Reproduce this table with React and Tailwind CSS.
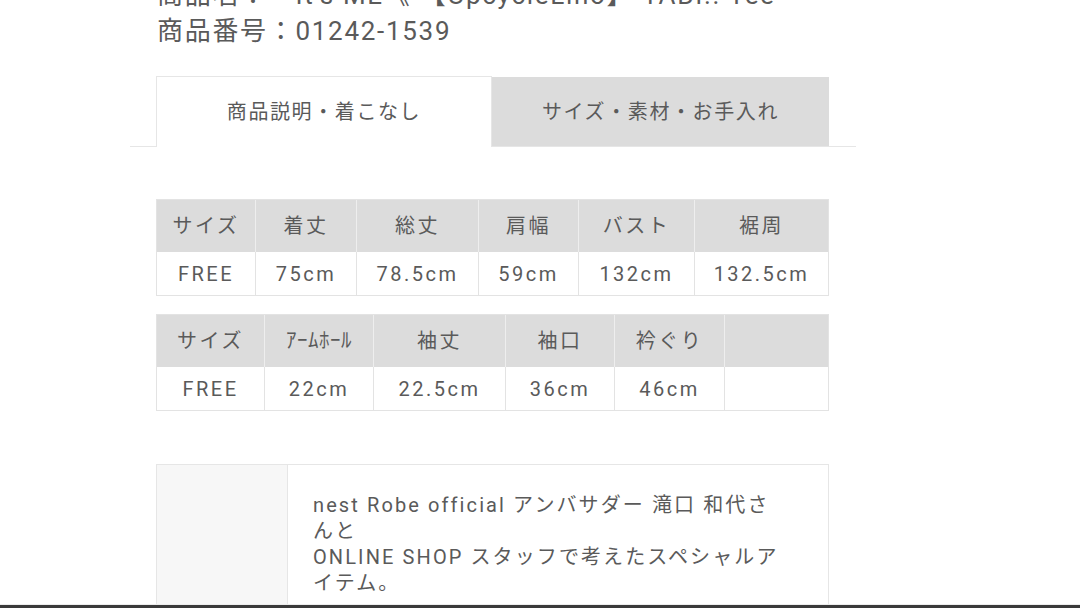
const FONT = { fontFamily: 'Roboto, "Noto Sans CJK JP", sans-serif' };

const table1 = {
  cols: "98px 101px 122px 100px 116px 1fr",
  head: ["サイズ", "着丈", "総丈", "肩幅", "バスト", "裾周"],
  body: ["FREE", "75cm", "78.5cm", "59cm", "132cm", "132.5cm"],
};

const table2 = {
  cols: "107px 109px 132px 109px 110px 1fr",
  head: ["サイズ", "ｱｰﾑﾎｰﾙ", "袖丈", "袖口", "衿ぐり", ""],
  body: ["FREE", "22cm", "22.5cm", "36cm", "46cm", ""],
};

function SizeTable({ table }) {
  return (
    <div className="border border-[#e3e3e3]">
      <div className="grid bg-[#dcdcdc]" style={{ gridTemplateColumns: table.cols }}>
        {table.head.map((label, i) => (
          <div
            key={i}
            className={`flex h-[52px] items-center justify-center ${
              i > 0 ? "border-l border-[#eeeeee]" : ""
            } ${label.startsWith("ｱ") ? "text-[21px] tracking-[0.5px]" : "tracking-[2.5px]"}`}
          >
            {label}
          </div>
        ))}
      </div>
      <div className="grid bg-white" style={{ gridTemplateColumns: table.cols }}>
        {table.body.map((value, i) => (
          <div
            key={i}
            className={`flex h-[43px] items-center justify-center tracking-[2.5px] ${
              i > 0 ? "border-l border-[#e3e3e3]" : ""
            }`}
          >
            {value}
          </div>
        ))}
      </div>
    </div>
  );
}

export default function App() {
  return (
    <div className="flex h-[608px] w-[1080px] flex-col overflow-hidden bg-white text-[#5a5a5a]" style={FONT}>
      <div className="flex-1 overflow-hidden">
        <div className="pl-[130px]" style={{ width: 856 }}>
          <div className="pl-[27px] text-[26px] leading-[36px] tracking-[1.7px]">
            <div className="-mt-[23px] whitespace-nowrap">商品名：　It's ME《 【UpcycleLino】 TABI.. Tee</div>
            <div className="whitespace-nowrap">商品番号：01242-1539</div>
          </div>

          <div className="mt-[27px] border-b border-[#e6e6e6] pl-[26px] pr-[27px]">
            <div className="-mb-px flex text-[20px] tracking-[1.6px]">
              <div className="flex h-[71px] w-[336px] items-center justify-center border border-b-0 border-[#e6e6e6] bg-white">
                商品説明・着こなし
              </div>
              <div className="mt-px flex h-[69px] flex-1 items-center justify-center bg-[#dcdcdc]">
                サイズ・素材・お手入れ
              </div>
            </div>
          </div>

          <div className="pl-[26px] pr-[27px] text-[20px]">
            <div className="mt-[52px]">
              <SizeTable table={table1} />
            </div>
            <div className="mt-[18px]">
              <SizeTable table={table2} />
            </div>

            <div className="mt-[53px] flex h-[200px] border border-[#e6e6e6]">
              <div className="w-[131px] border-r border-[#e6e6e6] bg-[#f7f7f7]" />
              <div className="flex-1 px-[25px] pt-[27px] text-[20px] leading-[26px] tracking-[2.1px]">
                <div className="whitespace-nowrap">nest Robe official アンバサダー 滝口 和代さ</div>
                <div className="whitespace-nowrap">んと</div>
                <div className="whitespace-nowrap">ONLINE SHOP スタッフで考えたスペシャルア</div>
                <div className="whitespace-nowrap">イテム。</div>
              </div>
            </div>
          </div>
        </div>
      </div>
      <div className="h-px bg-[#ececec]" />
      <div className="h-[3px] bg-[#3a3a3a]" />
    </div>
  );
}
